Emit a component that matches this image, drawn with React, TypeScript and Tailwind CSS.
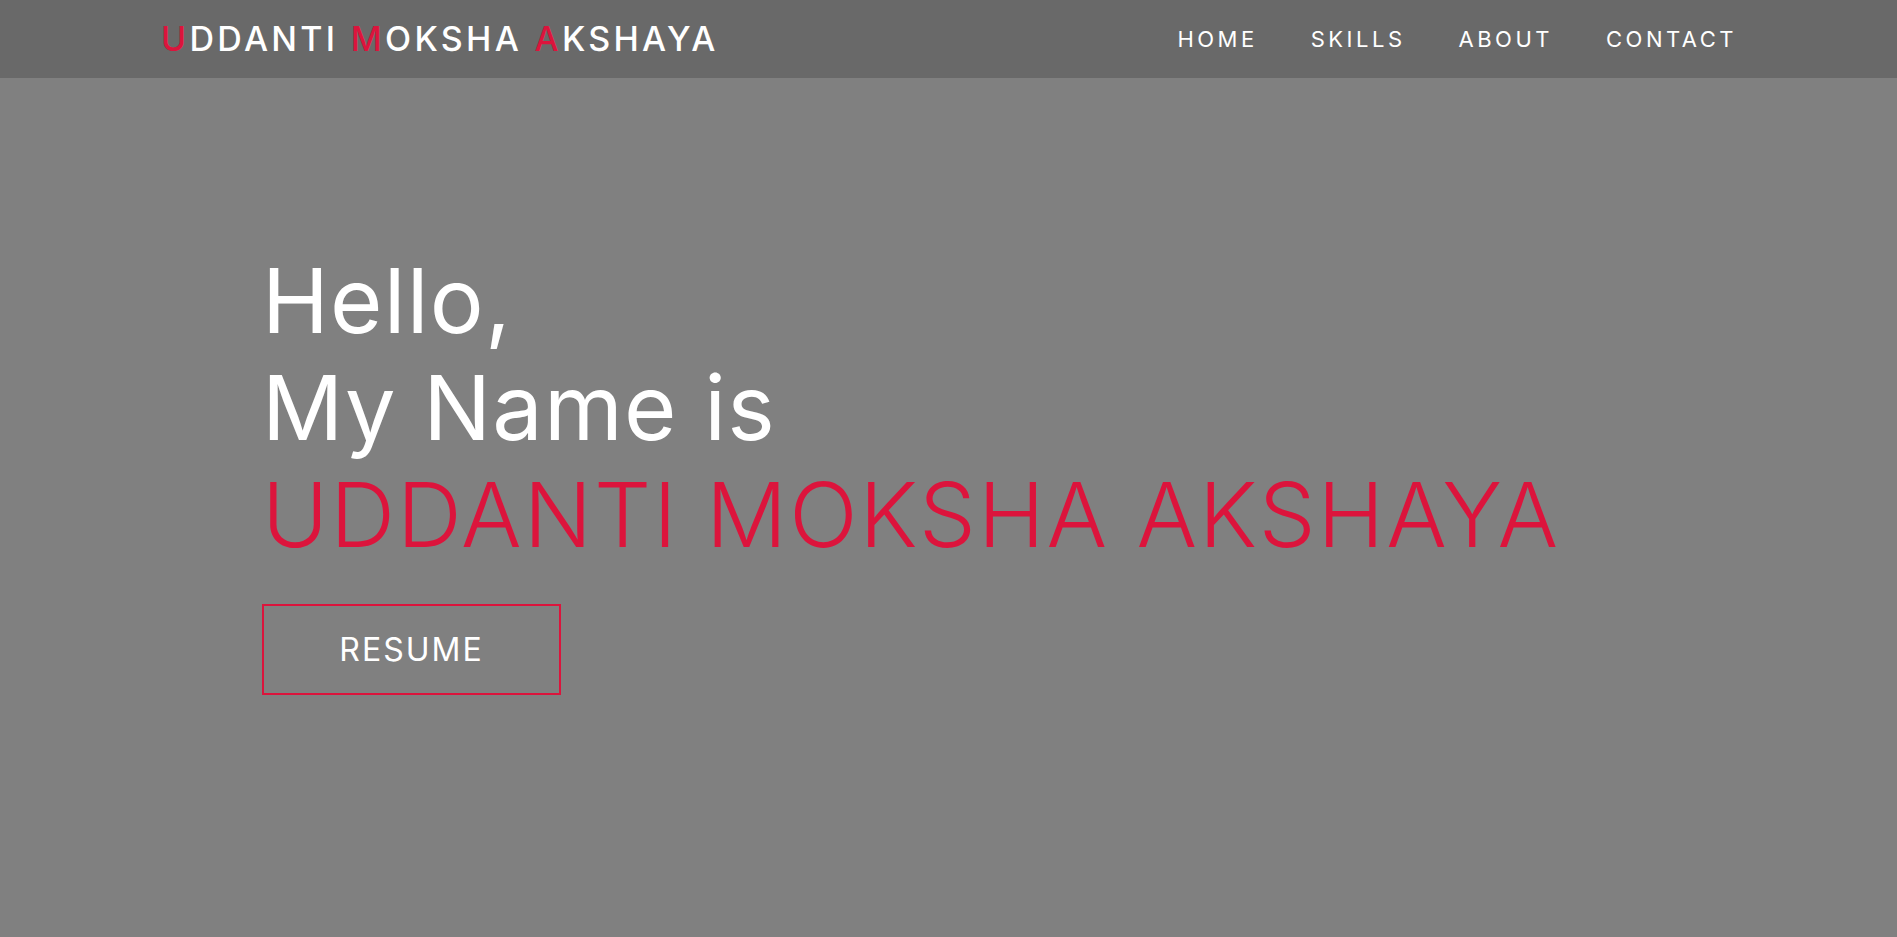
const navLinks = ['HOME', 'SKILLS', 'ABOUT', 'CONTACT'];

export default function App() {
  return (
    <div className="min-h-screen bg-[#808080] font-['Inter',sans-serif] text-white">
      {/* Top bar */}
      <header className="flex h-[78px] items-center justify-between bg-[#696969] pl-[161px] pr-[160px]">
        <a href="#" className="text-[34px] font-medium leading-none tracking-[3.3px]">
          <span className="text-[#dc143c]">U</span>DDANTI <span className="text-[#dc143c]">M</span>OKSHA{' '}
          <span className="text-[#dc143c]">A</span>KSHAYA
        </a>
        <nav className="flex items-center gap-[53px]">
          {navLinks.map((link) => (
            <a key={link} href="#" className="text-[22px] leading-none tracking-[3.5px]">
              {link}
            </a>
          ))}
        </nav>
      </header>

      {/* Hero */}
      <section className="pl-[262px] pt-[169px]">
        <h1 className="text-[90px] font-normal leading-[107px] tracking-[1.2px]">
          Hello,
          <br />
          My Name is
          <br />
          <span className="font-light tracking-[2px] text-[#dc143c]">UDDANTI MOKSHA AKSHAYA</span>
        </h1>
        <button className="mt-[36px] flex h-[91px] w-[299px] items-center justify-center border-2 border-[#dc143c] text-[32px] tracking-[2px] text-white">
          RESUME
        </button>
      </section>
    </div>
  );
}
